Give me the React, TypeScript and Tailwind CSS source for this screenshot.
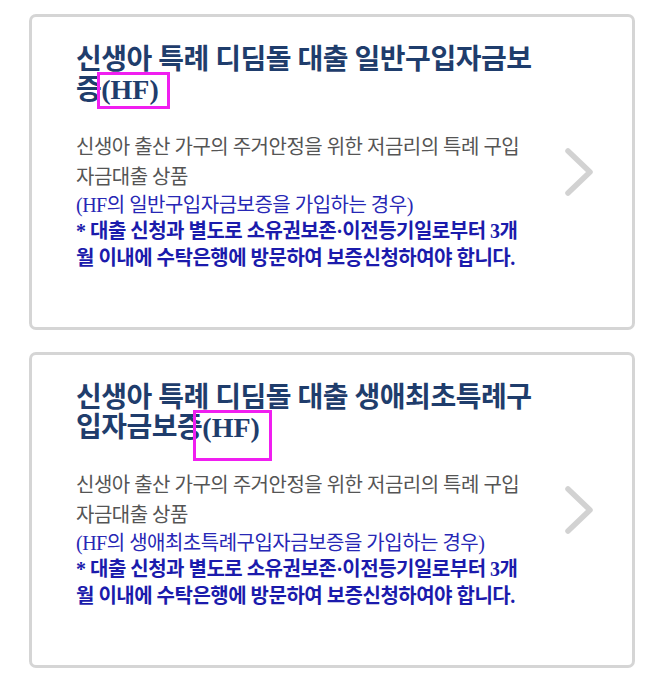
import { ReactNode } from 'react'

type Loan = {
  titleTop: string
  titleRest: string
  guarantee: string
  mark: { left: number; top: number; width: number; height: number }
}

const loans: Loan[] = [
  {
    titleTop: '신생아 특례 디딤돌 대출 일반구입자금보',
    titleRest: '증',
    guarantee: '일반구입자금보증',
    mark: { left: 65, top: 55, width: 73, height: 37 },
  },
  {
    titleTop: '신생아 특례 디딤돌 대출 생애최초특례구',
    titleRest: '입자금보증',
    guarantee: '생애최초특례구입자금보증',
    mark: { left: 161, top: 55, width: 79, height: 51 },
  },
]

const font = { fontFamily: '"Liberation Serif", "Noto Sans CJK KR", serif' }

function Chevron() {
  return (
    <svg width="34" height="52" viewBox="0 0 34 52" className="shrink-0 mr-[35px]">
      <polyline
        points="5,5 27,26 5,47"
        fill="none"
        stroke="#d2d2d2"
        strokeWidth="5.5"
        strokeLinecap="round"
        strokeLinejoin="round"
      />
    </svg>
  )
}

function LoanCard({ loan }: { loan: Loan }) {
  const title: ReactNode = (
    <h2 className="text-[28px] leading-[30px] font-bold tracking-[-0.5px] text-[#1f3d6c] whitespace-nowrap">
      {loan.titleTop}
      <br />
      {loan.titleRest}
      <span className="tracking-normal">(HF)</span>
    </h2>
  )

  return (
    <div className="relative flex items-center w-[606px] h-[316px] border-[3px] border-[#d5d5d5] rounded-[7px] bg-white">
      <div className="flex-1 self-start pl-[44px] pt-[28px]">
        {title}
        <div className="mt-[27px] text-[20px] tracking-[-0.5px] whitespace-nowrap">
          <p className="leading-[30px] text-[#555555]">
            신생아 출산 가구의 주거안정을 위한 저금리의 특례 구입
            <br />
            자금대출 상품
          </p>
          <p className="leading-[26px] text-[#2727b5]">(HF의 {loan.guarantee}을 가입하는 경우)</p>
          <p className="leading-[27px] font-bold text-[#1b1bac]">
            * 대출 신청과 별도로 소유권보존·이전등기일로부터 3개
            <br />
            월 이내에 수탁은행에 방문하여 보증신청하여야 합니다.
          </p>
        </div>
      </div>
      <Chevron />
      <div
        className="absolute border-[3px] border-[#f01ef0] pointer-events-none"
        style={{
          left: loan.mark.left,
          top: loan.mark.top,
          width: loan.mark.width,
          height: loan.mark.height,
        }}
      />
    </div>
  )
}

export default function App() {
  return (
    <div className="w-[672px] h-[680px] bg-white pt-[14px] pl-[29px] flex flex-col gap-[22px]" style={font}>
      {loans.map((loan) => (
        <LoanCard key={loan.titleTop} loan={loan} />
      ))}
    </div>
  )
}
